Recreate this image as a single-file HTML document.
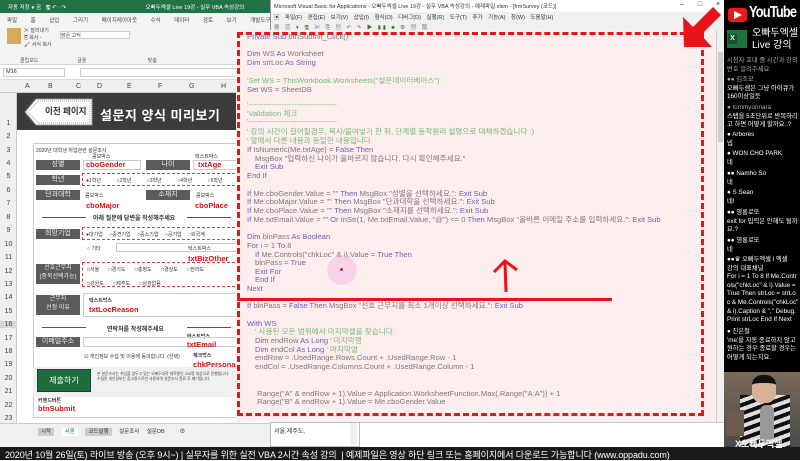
<!DOCTYPE html>
<html><head><meta charset="utf-8"><style>
*{margin:0;padding:0;box-sizing:border-box}
body{width:800px;height:460px;overflow:hidden;background:#fff;position:relative;font-family:"Liberation Sans","Noto Sans CJK KR",sans-serif}
.a{position:absolute;white-space:nowrap}
.lbl{position:absolute;background:#5b5b5b;color:#eee;font-size:7px;text-align:center;line-height:10px;height:10px}
.red{position:absolute;color:#e01010;font-weight:bold;font-size:7.5px;white-space:nowrap}
.sm{position:absolute;font-size:5px;color:#333;white-space:nowrap}
.code{position:absolute;font-size:7.6px;white-space:nowrap;color:#7e7880;line-height:9px}
.k{color:#6c62b4}.c{color:#7ab87a}
.rn{position:absolute;left:0;width:17px;font-size:7px;color:#444;text-align:center}
.chat{position:absolute;left:727px;font-size:6.3px;color:#fff;line-height:8.6px;white-space:nowrap}
.g{color:#aaa}
</style></head><body>
<div class="a" style="left:0;top:0;width:272px;height:13px;background:#217346"></div>
<div class="a" style="left:8px;top:3px;font-size:5.5px;color:#fff">자동 저장 ● 끔 &nbsp; 🖫 ↶ · ↷ &nbsp;&nbsp;&nbsp; &nbsp;&nbsp;&nbsp;&nbsp;&nbsp;&nbsp;&nbsp;&nbsp;&nbsp;&nbsp;&nbsp;&nbsp;&nbsp;&nbsp;&nbsp;&nbsp;&nbsp;&nbsp;&nbsp;&nbsp;&nbsp;&nbsp;&nbsp;&nbsp;&nbsp;&nbsp;&nbsp;&nbsp;&nbsp;&nbsp;&nbsp;&nbsp;&nbsp;&nbsp;&nbsp;&nbsp;&nbsp;&nbsp;&nbsp;&nbsp;&nbsp;&nbsp;&nbsp;&nbsp;&nbsp;&nbsp;&nbsp;오빠두엑셀 Live 19강 - 실무 VBA 속성강의</div>
<div class="a" style="left:0;top:13px;width:272px;height:52px;background:#f3f3f3;border-bottom:1px solid #d4d4d4"></div>
<div class="a" style="left:7px;top:16px;font-size:5.5px;color:#444;word-spacing:12px">파일 홈 삽입 그리기 페이지레이아웃 수식 데이터 검토 보기 개발도구 도움말</div>
<div class="a" style="left:7px;top:28px;width:14px;height:16px;background:#d9a95a"></div>
<div class="a" style="left:24px;top:28px;font-size:5px;color:#444;line-height:7px">✂ 잘라내기<br>⎘ 복사 -<br>🖌 서식 복사</div>
<div class="a" style="left:60px;top:31px;width:70px;height:8px;border:1px solid #ccc;background:#fff;font-size:5px;color:#444">맑은 고딕</div>
<div class="a" style="left:20px;top:57px;font-size:5px;color:#555">클립보드 &nbsp;&nbsp;&nbsp;&nbsp;&nbsp;&nbsp;&nbsp;&nbsp;&nbsp;&nbsp;&nbsp;&nbsp;&nbsp;&nbsp;&nbsp;&nbsp;&nbsp;&nbsp;&nbsp;&nbsp;&nbsp;&nbsp;&nbsp;&nbsp;&nbsp;&nbsp; 글꼴 &nbsp;&nbsp;&nbsp;&nbsp;&nbsp;&nbsp;&nbsp;&nbsp;&nbsp;&nbsp;&nbsp;&nbsp;&nbsp;&nbsp;&nbsp;&nbsp;&nbsp;&nbsp;&nbsp;&nbsp;&nbsp;&nbsp;&nbsp;&nbsp;&nbsp;&nbsp;&nbsp;&nbsp;&nbsp;&nbsp;&nbsp;&nbsp;&nbsp;&nbsp;&nbsp;&nbsp;&nbsp;&nbsp;&nbsp;&nbsp;&nbsp;&nbsp; 맞춤</div>
<div class="a" style="left:0;top:65px;width:240px;height:15px;background:#fff;border-bottom:1px solid #ddd"></div>
<div class="a" style="left:3px;top:68px;width:62px;height:9px;border:1px solid #ccc;font-size:5.5px;color:#333;padding-left:2px">M16</div>
<div class="a" style="left:80px;top:68px;width:160px;height:9px;border:1px solid #ccc"></div>
<div class="a" style="left:0;top:80px;width:240px;height:13px;background:#efefef;border-bottom:1px solid #ccc"></div>
<div class="a" style="left:25px;top:83px;font-size:7px;color:#444">A</div>
<div class="a" style="left:48px;top:83px;font-size:7px;color:#444">B</div>
<div class="a" style="left:76px;top:83px;font-size:7px;color:#444">C</div>
<div class="a" style="left:97px;top:83px;font-size:7px;color:#444">D</div>
<div class="a" style="left:127px;top:83px;font-size:7px;color:#444">E</div>
<div class="a" style="left:158px;top:83px;font-size:7px;color:#444">F</div>
<div class="a" style="left:189px;top:83px;font-size:7px;color:#444">G</div>
<div class="a" style="left:221px;top:83px;font-size:7px;color:#444">H</div>
<div class="a" style="left:0;top:93px;width:17px;height:330px;background:#efefef;border-right:1px solid #ccc"></div>
<div class="rn" style="top:120px">1</div>
<div class="rn" style="top:133px">2</div><div class="rn" style="top:147px">3</div><div class="rn" style="top:160px">4</div><div class="rn" style="top:173px">5</div><div class="rn" style="top:187px">6</div><div class="rn" style="top:200px">7</div><div class="rn" style="top:214px">8</div><div class="rn" style="top:227px">9</div><div class="rn" style="top:241px">10</div><div class="rn" style="top:254px">11</div><div class="rn" style="top:268px">12</div><div class="rn" style="top:281px">13</div><div class="rn" style="top:294px">14</div><div class="rn" style="top:308px">15</div><div class="rn" style="top:321px;background:#d6d6d6">16</div><div class="rn" style="top:335px">17</div><div class="rn" style="top:348px">18</div><div class="rn" style="top:361px">19</div><div class="rn" style="top:375px">20</div><div class="rn" style="top:388px">21</div><div class="rn" style="top:402px">22</div><div class="rn" style="top:415px">23</div>
<div class="a" style="left:17px;top:93px;width:223px;height:37px;background:#3c3c3c"></div>
<svg class="a" style="left:24px;top:98px" width="70" height="28"><polygon points="12,1 68,1 68,27 12,27 1,14" fill="#fff" stroke="#999"/><polygon points="14,3 66,3 66,25 14,25 4,14" fill="none" stroke="#aaa" stroke-dasharray="1,1"/></svg>
<div class="a" style="left:45px;top:105px;font-size:8.5px;font-weight:bold;color:#333">이전 페이지</div>
<div class="a" style="left:100px;top:105px;font-size:13px;font-weight:bold;color:#fff;letter-spacing:0.5px">설문지 양식 미리보기</div>
<div class="a" style="left:33px;top:143px;width:210px;height:275px;border:1px solid #ccc;background:#fff"></div>
<div class="sm" style="left:36px;top:147px">2020년 대학생 취업관련 설문조사</div>
<div class="sm" style="left:92px;top:153px">콤보박스</div><div class="sm" style="left:195px;top:153px">텍스트박스</div>
<div class="lbl" style="left:36px;top:160px;width:44px">성별</div>
<div class="a" style="left:83px;top:160px;width:58px;height:10px;border:1px solid #ccc"></div>
<div class="red" style="left:86px;top:160px">cboGender</div>
<div class="lbl" style="left:146px;top:160px;width:44px">나이</div>
<div class="a" style="left:193px;top:160px;width:45px;height:10px;border:1px solid #ccc"></div>
<div class="red" style="left:198px;top:160px">txtAge</div>
<div class="lbl" style="left:36px;top:175px;width:44px">학년</div>
<div class="a" style="left:82px;top:173px;width:158px;height:13px;border:1.5px dashed #e04040"></div>
<div class="sm" style="left:86px;top:177px;word-spacing:14px">●1학년 ○2학년 ○3학년 ○4학년 ○5학년</div>
<div class="lbl" style="left:36px;top:190px;width:44px">단과대학</div>
<div class="sm" style="left:85px;top:192px">콤보박스</div>
<div class="lbl" style="left:146px;top:190px;width:44px">소재지</div>
<div class="sm" style="left:196px;top:192px">콤보박스</div>
<div class="red" style="left:86px;top:201px">cboMajor</div><div class="red" style="left:195px;top:201px">cboPlace</div>
<div class="a" style="left:42px;top:217px;width:44px;border-top:1px solid #555"></div>
<div class="a" style="left:93px;top:213px;font-size:6px;font-weight:bold;color:#333">아래 질문에 답변을 작성해주세요</div>
<div class="a" style="left:187px;top:217px;width:44px;border-top:1px solid #555"></div>
<div class="lbl" style="left:36px;top:229px;width:44px">희망기업</div>
<div class="a" style="left:82px;top:227px;width:158px;height:13px;border:1.5px dashed #e04040"></div>
<div class="sm" style="left:86px;top:231px;word-spacing:5px">●대기업 ○중견기업 ○중소기업 ○공기업 ○외국계</div>
<div class="sm" style="left:87px;top:245px">○ 기타</div>
<div class="a" style="left:116px;top:243px;width:124px;height:9px;border:1px solid #ccc"></div>
<div class="sm" style="left:188px;top:245px">텍스트박스</div>
<div class="red" style="left:188px;top:254px">txtBizOther</div>
<div class="lbl" style="left:36px;top:264px;width:44px;height:20px;line-height:9px;font-size:6px">선호근무지<br>(중복선택가능)</div>
<div class="a" style="left:82px;top:262px;width:158px;height:25px;border:1.5px dashed #e04040"></div>
<div class="sm" style="left:87px;top:266px;word-spacing:8px">□서울 □경기도 □충청도 □경상도 □전라도</div>
<div class="sm" style="left:87px;top:280px;word-spacing:8px">□강원도 □제주도 □상관없음</div>
<div class="lbl" style="left:36px;top:295px;width:44px;height:20px;line-height:9px;font-size:6px">근무지<br>선정 이유</div>
<div class="a" style="left:83px;top:293px;width:157px;height:24px;border:1px solid #ccc"></div>
<div class="sm" style="left:89px;top:297px;font-weight:bold">텍스트박스</div>
<div class="red" style="left:89px;top:305px">txtLocReason</div>
<div class="a" style="left:42px;top:327px;width:44px;border-top:1px solid #555"></div>
<div class="a" style="left:107px;top:324px;font-size:6px;font-weight:bold;color:#333">연락처를 작성해주세요</div>
<div class="a" style="left:187px;top:327px;width:44px;border-top:1px solid #555"></div>
<div class="sm" style="left:187px;top:333px;font-weight:bold">텍스트박스</div>
<div class="lbl" style="left:36px;top:337px;width:44px">이메일주소</div>
<div class="a" style="left:83px;top:337px;width:157px;height:10px;border:1px solid #ccc"></div>
<div class="red" style="left:187px;top:340px">txtEmail</div>
<div class="sm" style="left:84px;top:353px">☑ 개인정보 수집 및 이용에 동의합니다. (선택)</div>
<div class="sm" style="left:193px;top:352px;font-weight:bold">체크박스</div>
<div class="red" style="left:193px;top:360px">chkPersonal</div>
<div class="a" style="left:33px;top:367px;width:204px;height:30px;background:#f0f0f0"></div>
<div class="a" style="left:37px;top:369px;width:54px;height:23px;background:#1e6b3c;border:1px solid #0e4a26;color:#fff;font-size:8px;text-align:center;line-height:21px">제출하기</div>
<div class="a" style="left:97px;top:372px;font-size:3.8px;color:#444;line-height:5px">본 설문조사는 취업을 앞두고 있는 오빠두대학 재학중인 200명 대상으로 진행됩니다.<br>수집된 개인정보는 참고용으로만 사용되며 설문조사 종료 후 폐기됩니다.</div>
<div class="sm" style="left:38px;top:397px;font-weight:bold">커맨드버튼</div>
<div class="red" style="left:38px;top:404px">btnSubmit</div>
<div class="a" style="left:0;top:423px;width:270px;height:24px;background:#f0f0f0;border-top:1px solid #ccc"></div>
<div class="a" style="left:38px;top:427px;font-size:5.5px;color:#333;word-spacing:6px"><span style="background:#ccc;padding:1px 3px">시작</span> <span style="background:#fff;padding:1px 3px;color:#217346">서론</span> <span style="background:#ccc;padding:1px 3px">코드실행</span> 설문조사 설문DB &nbsp;⊕</div>
<div class="a" style="left:270px;top:0;width:454px;height:12px;background:#fff;border-left:1px solid #999"></div>
<div class="a" style="left:274px;top:2px;font-size:5.5px;color:#333">Microsoft Visual Basic for Applications - 오빠두엑셀 Live 19강 - 실무 VBA 속성강의 - 예제파일.xlsm - [frmSurvey (코드)]</div>
<div class="a" style="left:680px;top:1px;font-size:7px;color:#333;word-spacing:12px">– □ ×</div>
<div class="a" style="left:270px;top:12px;width:454px;height:20px;background:#f0f0f0;border-left:1px solid #999"></div>
<div class="a" style="left:274px;top:13px;font-size:5.5px;color:#333;word-spacing:4px">▣ 파일(F) 편집(E) 보기(V) 삽입(I) 형식(O) 디버그(D) 실행(R) 도구(T) 추가 기능(A) 창(W) 도움말(H)</div>
<div class="a" style="left:274px;top:23px;font-size:5.5px;color:#2a7a2a;letter-spacing:2px">▦ ▥ ▾ 🖫 ✂ ⎘ ▤ ↶ ↷ ▶ ▮▮ ■ ⚙ ▤ ▧</div>
<div class="a" style="left:236px;top:30px;width:480px;height:392px;background:#fdeeee"></div>
<div class="a" style="left:716px;top:30px;width:8px;height:392px;background:#f0f0f0;border-left:1px solid #ccc"></div>
<div class="a" style="left:718px;top:52px;width:5px;height:90px;background:#cdcdcd"></div>
<div class="a" style="left:237px;top:32px;width:467px;height:384px;border:3px dashed #e8141b"></div>
<div class="code" style="left:247px;top:32px"><span class="k">Private Sub</span> btnSubmit_Click()</div>
<div class="code" style="left:247px;top:49px"><span class="k">Dim</span> WS <span class="k">As</span> Worksheet</div>
<div class="code" style="left:247px;top:58px"><span class="k">Dim</span> strLoc <span class="k">As String</span></div>
<div class="code c" style="left:247px;top:76px">'Set WS = ThisWorkbook.Worksheets("설문데이터베이스")</div>
<div class="code" style="left:247px;top:85px"><span class="k">Set</span> WS = SheetDB</div>
<div class="code c" style="left:247px;top:100px">'-----------------------------------</div>
<div class="code c" style="left:247px;top:109px">'Validation 체크</div>
<div class="code c" style="left:247px;top:117px">'-----------------------------------</div>
<div class="code c" style="left:247px;top:127px">' 강의 시간이 길어질경우, 복사/붙여넣기 한 뒤, 단계별 동작원리 설명으로 대체하겠습니다 :)</div>
<div class="code c" style="left:247px;top:136px">' 앞에서 다룬 내용과 동일한 내용입니다.</div>
<div class="code" style="left:247px;top:145px"><span class="k">If</span> IsNumeric(Me.txtAge) = <span class="k">False Then</span></div>
<div class="code" style="left:255px;top:154px">MsgBox "입력하신 나이가 올바르지 않습니다. 다시 확인해주세요."</div>
<div class="code k" style="left:255px;top:162px">Exit Sub</div>
<div class="code k" style="left:247px;top:171px">End If</div>
<div class="code" style="left:247px;top:189px"><span class="k">If</span> Me.cboGender.Value = "" <span class="k">Then</span> MsgBox "성별을 선택하세요.": <span class="k">Exit Sub</span></div>
<div class="code" style="left:247px;top:197px"><span class="k">If</span> Me.cboMajor.Value = "" <span class="k">Then</span> MsgBox "단과대학을 선택하세요.": <span class="k">Exit Sub</span></div>
<div class="code" style="left:247px;top:206px"><span class="k">If</span> Me.cboPlace.Value = "" <span class="k">Then</span> MsgBox "소재지를 선택하세요.": <span class="k">Exit Sub</span></div>
<div class="code" style="left:247px;top:215px"><span class="k">If</span> Me.txtEmail.Value = "" <span class="k">Or</span> InStr(1, Me.txtEmail.Value, "@") &lt;= 0 <span class="k">Then</span> MsgBox "올바른 이메일 주소를 입력하세요.": <span class="k">Exit Sub</span></div>
<div class="code" style="left:247px;top:232px"><span class="k">Dim</span> blnPass <span class="k">As Boolean</span></div>
<div class="code" style="left:247px;top:241px"><span class="k">For</span> i = 1 <span class="k">To</span> 8</div>
<div class="code" style="left:255px;top:250px"><span class="k">If</span> Me.Controls("chkLoc" &amp; i).Value = <span class="k">True Then</span></div>
<div class="code" style="left:255px;top:258px">blnPass = <span class="k">True</span></div>
<div class="code k" style="left:255px;top:267px">Exit For</div>
<div class="code k" style="left:255px;top:275px">End If</div>
<div class="code k" style="left:247px;top:284px">Next</div>
<div class="a" style="left:327px;top:255px;width:30px;height:30px;border-radius:50%;background:rgba(240,160,220,0.35)"></div>
<div class="a" style="left:340px;top:268px;width:3px;height:3px;border-radius:50%;background:#e02040"></div>
<div class="a" style="left:237px;top:298px;width:375px;height:3px;background:#e8141b"></div>
<svg class="a" style="left:490px;top:258px" width="32" height="36"><path d="M16 34 L15 4 M4 14 L15 3 L27 12" stroke="#e8141b" stroke-width="3" fill="none"/></svg>
<div class="code" style="left:247px;top:301px"><span class="k">If</span> blnPass = <span class="k">False Then</span> MsgBox "선호 근무지를 최소 1개이상 선택하세요.": <span class="k">Exit Sub</span></div>
<div class="code k" style="left:247px;top:319px">With WS</div>
<div class="code c" style="left:255px;top:327px">' 사용된 모든 범위에서 마지막셀을 찾습니다.</div>
<div class="code" style="left:255px;top:336px"><span class="k">Dim</span> endRow <span class="k">As Long</span> <span class="c">' 마지막행</span></div>
<div class="code" style="left:255px;top:345px"><span class="k">Dim</span> endCol <span class="k">As Long</span> <span class="c">' 마지막열</span></div>
<div class="code" style="left:255px;top:353px">endRow = .UsedRange.Rows.Count + .UsedRange.Row - 1</div>
<div class="code" style="left:255px;top:362px">endCol = .UsedRange.Columns.Count + .UsedRange.Column - 1</div>
<div class="code" style="left:255px;top:389px">.Range("A" &amp; endRow + 1).Value = Application.WorksheetFunction.Max(.Range("A:A")) + 1</div>
<div class="code" style="left:255px;top:397px">.Range("B" &amp; endRow + 1).Value = Me.cboGender.Value</div>
<div class="a" style="left:270px;top:422px;width:454px;height:25px;background:#fff;border-top:1px solid #ccc"></div>
<div class="a" style="left:270px;top:422px;width:90px;height:25px;border:1px solid #bbb"></div>
<div class="a" style="left:274px;top:426px;font-size:6px;color:#333">서울,제주도,</div>
<div class="a" style="left:350px;top:423px;width:7px;height:22px;background:#eee"></div>
<div class="a" style="left:0;top:447px;width:800px;height:13px;background:#1a1a1a"></div>
<div class="a" style="left:5px;top:448px;font-size:9px;color:#fff;letter-spacing:-0.1px">2020년 10월 26일(토) 라이브 방송 (오후 9시~) | 실무자를 위한 실전 VBA 2시간 속성 강의 &nbsp;| 예제파일은 영상 하단 링크 또는 홈페이지에서 다운로드 가능합니다 (www.oppadu.com)</div>
<div class="a" style="left:724px;top:0;width:76px;height:372px;background:#000"></div>
<div class="a" style="left:728px;top:8px;width:19px;height:14px;background:#e81b1b;border-radius:3px"></div>
<svg class="a" style="left:734px;top:11px" width="8" height="8"><polygon points="0,0 8,4 0,8" fill="#fff"/></svg>
<div class="a" style="left:749px;top:4px;font-size:16px;font-weight:bold;color:#fff;letter-spacing:-1px;transform:scaleX(0.8);transform-origin:left">YouTube</div>
<div class="a" style="left:727px;top:30px;width:20px;height:18px;background:#1e7145"></div>
<div class="a" style="left:728px;top:34px;width:9px;height:10px;background:#10512c;color:#fff;font-size:7px;font-weight:bold;text-align:center;line-height:10px">X</div>
<div class="a" style="left:752px;top:28px;font-size:10px;color:#fff;line-height:12px">오빠두엑셀<br>Live 강의</div>
<div class="chat" style="top:57px"><span class="g">시청자 포대 중 시간과 강의</span><br><span class="g">번호 알려주세요</span></div>
<div class="chat" style="top:76px"><span class="g">●● 김조모</span><br>오빠두샘은 그냥 아이큐가<br>160이상일듯</div>
<div class="chat" style="top:104px"><span class="g">● tommyonnara</span><br>스텝을 5초단위로 반복하리<br>고 하면 어떻게 할까요..?</div>
<div class="chat" style="top:131px">● Arbores<br>넵</div>
<div class="chat" style="top:150px">● WON CHO PARK<br>네</div>
<div class="chat" style="top:170px">●● Namho So<br>네</div>
<div class="chat" style="top:189px">● S Sean<br>네!</div>
<div class="chat" style="top:209px">●● 영롱로또<br>exit for 입력은 안해도 될까<br>요.?</div>
<div class="chat" style="top:237px">●● 영롱로또<br>네</div>
<div class="chat" style="top:256px">●●♛ 오빠두엑셀 l 엑셀<br>강의 대표채널<br>For i = 1 To 8 If Me.Contr<br>ols("chkLoc" &amp; i).Value =<br>True Then strLoc = strLo<br>c &amp; Me.Controls("chkLoc"<br>&amp; i).Caption &amp; "," Debug.<br>Print strLoc End If Next</div>
<div class="chat" style="top:328px">● 진은철<br>'me'을 자동 종료하지 않고<br>원하는 경우 종료할 경우는<br>어떻게 되는지요.</div>
<div class="a" style="left:724px;top:372px;width:76px;height:75px;background:linear-gradient(#7a6a5a,#4a4a4a)"></div>
<div class="a" style="left:740px;top:395px;width:50px;height:52px;background:repeating-linear-gradient(160deg,#111 0 4px,#ddd 4px 8px)"></div>
<div class="a" style="left:752px;top:375px;width:24px;height:28px;border-radius:10px;background:#d9b29a;border-top:8px solid #111"></div>
<div class="a" style="left:760px;top:405px;width:14px;height:38px;background:#999;border-radius:6px"></div>
<div class="a" style="left:726px;top:410px;width:18px;height:26px;background:#6a5a50"></div>
<div class="a" style="left:735px;top:437px;font-size:9px;font-weight:bold;color:#fff">X오빠두엑셀</div>
<svg class="a" style="left:670px;top:0" width="54" height="50"><polygon points="14,47 13,17 23,27 43,7 51,15 31,35 42,47" fill="#e8141b"/></svg>
</body></html>
